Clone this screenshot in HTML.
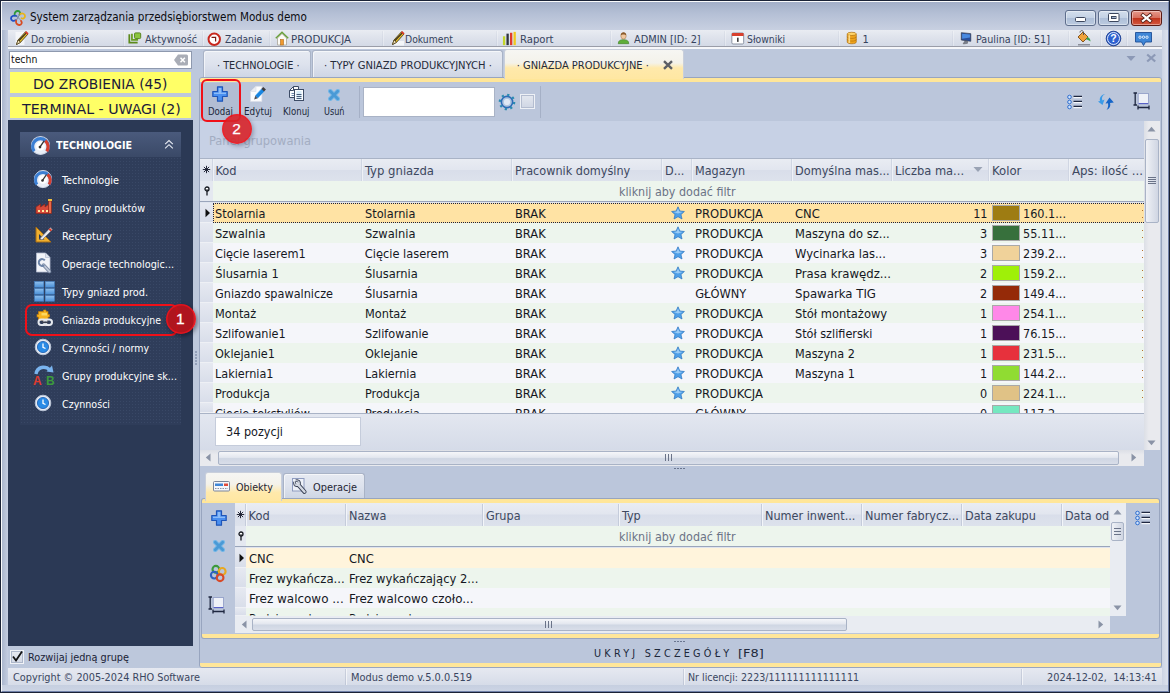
<!DOCTYPE html>
<html lang="pl"><head><meta charset="utf-8"><title>System zarządzania przedsiębiorstwem Modus demo</title>
<style>
html,body{margin:0;padding:0;}
body{width:1170px;height:693px;overflow:hidden;background:#bcc7dc;}
#win{position:relative;width:1170px;height:693px;overflow:hidden;background:#bcc7dc;}
#win div,#win span.t,#win svg{position:absolute;box-sizing:border-box;}
span.t{white-space:nowrap;display:block;}
#win div.sec{left:0;top:0;width:1170px;height:693px;}

</style></head>
<body>
<div id="win">
<div class="sec titlebar">
<div style="left:0px;top:0px;width:1170px;height:693px;background:#bdc8dc;"></div>
<div style="left:2px;top:2px;width:1166px;height:28px;background:linear-gradient(#a3afc8 0%,#b4bfd5 40%,#c8d0e1 100%);"></div>
<div style="left:2px;top:30px;width:6px;height:655px;background:linear-gradient(90deg,#aab6cd,#c4cde0);"></div>
<div style="left:1162px;top:30px;width:6px;height:655px;background:linear-gradient(90deg,#ccd4e4,#dde2ed);"></div>
<div style="left:2px;top:685px;width:1166px;height:6px;background:linear-gradient(#c6cfe0,#ccd4e4);"></div>
<div style="left:1px;top:1px;width:1168px;height:691px;border:1px solid #fafbfc;border-right-color:#7080a8;border-bottom-color:#7080a8;"></div>
<div style="left:0px;top:0px;width:1170px;height:693px;border:1px solid #1a2236;"></div>
<span class="t" style="font-family:'DejaVu Sans Condensed','Liberation Sans',sans-serif;font-size:12px;line-height:15px;color:#0c0c10;left:30px;transform-origin:0 0;top:10.00px;transform:scaleX(0.965);">System zarządzania przedsiębiorstwem Modus demo</span>
<div style="left:1065px;top:10px;width:31px;height:16px;background:linear-gradient(#d3deec 0%,#c4d2e5 48%,#aebfd8 52%,#bccbe0 100%);border:1px solid #5e6e8c;border-radius:3px;box-shadow:inset 0 0 0 1px rgba(255,255,255,.4);"></div>
<div style="left:1098px;top:10px;width:31px;height:16px;background:linear-gradient(#d3deec 0%,#c4d2e5 48%,#aebfd8 52%,#bccbe0 100%);border:1px solid #5e6e8c;border-radius:3px;box-shadow:inset 0 0 0 1px rgba(255,255,255,.4);"></div>
<div style="left:1131px;top:10px;width:31px;height:16px;background:linear-gradient(#e69a8c 0%,#d8705e 48%,#c0341c 52%,#d4563e 100%);border:1px solid #5a1a14;border-radius:3px;box-shadow:inset 0 0 0 1px rgba(255,255,255,.4);"></div>
<svg style="left:1065px;top:10px" width="97" height="16" viewBox="0 0 97 16"><rect x="10.500" y="7.500" width="10" height="4" rx="1" fill="#fff" stroke="#3c475e" stroke-width="1"/><rect x="43.500" y="3.500" width="10.500" height="8" rx="1" fill="#fff" stroke="#3c475e" stroke-width="1"/><rect x="46.500" y="6.500" width="4.500" height="2" fill="#9fb2cc" stroke="#3c475e" stroke-width="1"/><path d="M78 5.200 L85 10.800 M85 5.200 L78 10.800" stroke="#5a2018" stroke-width="3.800" stroke-linecap="square"/><path d="M78 5.200 L85 10.800 M85 5.200 L78 10.800" stroke="#fff" stroke-width="2.200" stroke-linecap="square"/></svg>
<svg style="left:10px;top:10px" width="16" height="16" viewBox="0 0 16 16" fill="none" stroke-linecap="round"><path d="M4.800 5.500 C4 2.500 6 .8 8 1 C10 1.200 10.500 3 9.500 4.500" stroke="#2f9a3a" stroke-width="1.800"/><path d="M10 4.200 C12.500 2.500 15 4 15 6 C15 8 13 9 11.500 8.300" stroke="#e8b418" stroke-width="1.800"/><path d="M6.500 6 C3.500 4.800 1 6.500 1 8.500 C1 10.500 3.500 11.500 5.500 10.300" stroke="#2050c8" stroke-width="1.800"/><path d="M6.200 10.500 C5.500 13.500 7.500 15.200 9.500 15 C11.500 14.800 12.500 12.500 11 10.800" stroke="#d84a20" stroke-width="1.800"/><path d="M6.500 6 L10 9.500 M9.500 4.500 L6.500 10" stroke="#6a7a90" stroke-width=".8"/></svg>
</div>
<div class="sec menubar">
<div style="left:8px;top:30px;width:1154px;height:17px;background:linear-gradient(#e9ecf2,#dfe3ec 45%,#d4dae6);border-bottom:1px solid #9a9da8;"></div>
<div style="left:8px;top:47px;width:1154px;height:1.5px;background:#f6f7fa;"></div>
<span class="t" style="font-family:'DejaVu Sans Condensed','Liberation Sans',sans-serif;font-size:11px;line-height:14px;color:#36435d;left:30.5px;transform-origin:0 0;top:33.00px;transform:scaleX(0.942);">Do zrobienia</span>
<span class="t" style="font-family:'DejaVu Sans Condensed','Liberation Sans',sans-serif;font-size:11px;line-height:14px;color:#36435d;left:145px;transform-origin:0 0;top:33.00px;transform:scaleX(0.977);">Aktywność</span>
<span class="t" style="font-family:'DejaVu Sans Condensed','Liberation Sans',sans-serif;font-size:11px;line-height:14px;color:#36435d;left:225px;transform-origin:0 0;top:33.00px;transform:scaleX(0.918);">Zadanie</span>
<span class="t" style="font-family:'DejaVu Sans Condensed','Liberation Sans',sans-serif;font-size:11px;line-height:14px;color:#36435d;left:291.3px;transform-origin:0 0;top:33.00px;transform:scaleX(1.038);">PRODUKCJA</span>
<span class="t" style="font-family:'DejaVu Sans Condensed','Liberation Sans',sans-serif;font-size:11px;line-height:14px;color:#36435d;left:405.4px;transform-origin:0 0;top:33.00px;transform:scaleX(0.937);">Dokument</span>
<span class="t" style="font-family:'DejaVu Sans Condensed','Liberation Sans',sans-serif;font-size:11px;line-height:14px;color:#36435d;left:519.5px;transform-origin:0 0;top:33.00px;transform:scaleX(1.016);">Raport</span>
<span class="t" style="font-family:'DejaVu Sans Condensed','Liberation Sans',sans-serif;font-size:11px;line-height:14px;color:#36435d;left:634px;transform-origin:0 0;top:33.00px;transform:scaleX(0.989);">ADMIN [ID: 2]</span>
<span class="t" style="font-family:'DejaVu Sans Condensed','Liberation Sans',sans-serif;font-size:11px;line-height:14px;color:#36435d;left:747px;transform-origin:0 0;top:33.00px;transform:scaleX(0.937);">Słowniki</span>
<span class="t" style="font-family:'DejaVu Sans Condensed','Liberation Sans',sans-serif;font-size:11px;line-height:14px;color:#36435d;left:862.5px;transform-origin:0 0;top:33.00px;">1</span>
<span class="t" style="font-family:'DejaVu Sans Condensed','Liberation Sans',sans-serif;font-size:11px;line-height:14px;color:#36435d;left:975.6px;transform-origin:0 0;top:33.00px;transform:scaleX(0.972);">Paulina [ID: 51]</span>
<div style="left:123px;top:31px;width:2px;height:15px;background:linear-gradient(90deg,rgba(140,150,175,.10) 50%,rgba(255,255,255,.30) 50%);"></div>
<div style="left:202px;top:31px;width:2px;height:15px;background:linear-gradient(90deg,rgba(140,150,175,.10) 50%,rgba(255,255,255,.30) 50%);"></div>
<div style="left:269px;top:31px;width:2px;height:15px;background:linear-gradient(90deg,rgba(140,150,175,.10) 50%,rgba(255,255,255,.30) 50%);"></div>
<div style="left:382px;top:31px;width:2px;height:15px;background:linear-gradient(90deg,rgba(140,150,175,.10) 50%,rgba(255,255,255,.30) 50%);"></div>
<div style="left:496px;top:31px;width:2px;height:15px;background:linear-gradient(90deg,rgba(140,150,175,.10) 50%,rgba(255,255,255,.30) 50%);"></div>
<div style="left:610px;top:31px;width:2px;height:15px;background:linear-gradient(90deg,rgba(140,150,175,.10) 50%,rgba(255,255,255,.30) 50%);"></div>
<div style="left:724px;top:31px;width:2px;height:15px;background:linear-gradient(90deg,rgba(140,150,175,.10) 50%,rgba(255,255,255,.30) 50%);"></div>
<div style="left:838px;top:31px;width:2px;height:15px;background:linear-gradient(90deg,rgba(140,150,175,.10) 50%,rgba(255,255,255,.30) 50%);"></div>
<div style="left:952px;top:31px;width:2px;height:15px;background:linear-gradient(90deg,rgba(140,150,175,.10) 50%,rgba(255,255,255,.30) 50%);"></div>
<div style="left:1068px;top:31px;width:2px;height:15px;background:linear-gradient(90deg,rgba(140,150,175,.10) 50%,rgba(255,255,255,.30) 50%);"></div>
<div style="left:1100px;top:31px;width:2px;height:15px;background:linear-gradient(90deg,rgba(140,150,175,.10) 50%,rgba(255,255,255,.30) 50%);"></div>
<div style="left:1126px;top:31px;width:2px;height:15px;background:linear-gradient(90deg,rgba(140,150,175,.10) 50%,rgba(255,255,255,.30) 50%);"></div>
<svg style="left:14px;top:30px" width="16" height="17" viewBox="0 0 16 17"><path d="M1.500 2h9v13h-9z" fill="#f6f7fa" opacity=".9"/><path d="M2.500 14.500 L4 10 L11.500 1.800 L14 4 L6.500 12.300 Z" fill="#f0c828" stroke="#4a3c18" stroke-width=".9"/><path d="M4.800 10.800 L12.600 2.600" stroke="#3a3020" stroke-width="1.300"/><path d="M11.500 1.800 L14 4" stroke="#d83a2a" stroke-width="1.800"/><path d="M2.500 14.500 L4 10 L6.500 12.300 Z" fill="#f4e6c0" stroke="#4a3c18" stroke-width=".7"/></svg>
<svg style="left:128px;top:31.500px" width="14" height="14" viewBox="0 0 16 16"><path d="M1.5 2.5v9.5h9.5" fill="none" stroke="#5c8a1c" stroke-width="2"/><path d="M4.5 2v7h7" fill="none" stroke="#6a9e22" stroke-width="2"/><rect x="7.5" y="1" width="7" height="6.5" rx="1.2" fill="#8cc63f" stroke="#4e7a16"/></svg>
<svg style="left:207px;top:31.500px" width="14.500" height="14.500" viewBox="0 0 16 16"><circle cx="8" cy="8" r="6.3" fill="#fff" stroke="#c8281e" stroke-width="2.2"/><path d="M5 6h4.5v4.5" fill="none" stroke="#7a1a14" stroke-width="1.3"/></svg>
<svg style="left:275px;top:31px" width="14" height="15" viewBox="0 0 14 15"><path d="M2.500 7 L7 2.600 L11.500 7 V14 H2.500z" fill="#fcfaf4" stroke="#a8a498" stroke-width=".8"/><path d="M.8 7.200 L7 1.200 L13.200 7.200" fill="none" stroke="#6aa03a" stroke-width="1.500"/><rect x="5.500" y="8.500" width="3" height="5.500" fill="#f09a30" stroke="#b06a18" stroke-width=".6"/></svg>
<svg style="left:389.500px;top:30px" width="16" height="17" viewBox="0 0 16 17"><path d="M6 11h8v4.500h-10z" fill="#f6f7fa" opacity=".9"/><path d="M2.500 14.500 L4 10 L11.500 1.800 L14 4 L6.500 12.300 Z" fill="#f0c828" stroke="#4a3c18" stroke-width=".9"/><path d="M4.800 10.800 L12.600 2.600" stroke="#3a3020" stroke-width="1.300"/><path d="M11.500 1.800 L14 4" stroke="#d83a2a" stroke-width="1.800"/><path d="M2.500 14.500 L4 10 L6.500 12.300 Z" fill="#f4e6c0" stroke="#4a3c18" stroke-width=".7"/></svg>
<svg style="left:502px;top:31px" width="16" height="15" viewBox="0 0 18 17"><rect x="1" y="6" width="2.6" height="10" fill="#c4d62a"/><rect x="5" y="3" width="2.6" height="13" fill="#2e3440"/><rect x="9" y="2" width="2.6" height="14" fill="#e03a2e"/><rect x="13" y="1" width="2.6" height="15" fill="#f0c81e"/></svg>
<svg style="left:617px;top:31px" width="13" height="14" viewBox="0 0 16 17"><path d="M1.5 15.5c0-4 3-5 6.5-5s6.5 1 6.500 5z" fill="#5fae3a" stroke="#3c7a20" stroke-width=".7"/><ellipse cx="8" cy="6" rx="3.3" ry="3.8" fill="#f0c8a0" stroke="#a87848" stroke-width=".7"/><path d="M4.6 5.2c.2-3 1.8-3.8 3.400-3.800s3.200.8 3.400 3.800c-1.400-1.400-5.400-1.400-6.800 0z" fill="#8a5a2a"/></svg>
<svg style="left:731px;top:31.500px" width="13.500" height="13" viewBox="0 0 16 15"><rect x="1" y="1" width="14" height="13" rx="1.5" fill="#fff" stroke="#7a8496"/><rect x="1" y="1" width="14" height="3.600" rx="1" fill="#d8402e"/><rect x="7.2" y="6.500" width="1.800" height="5" fill="#333"/></svg>
<svg style="left:846px;top:31px" width="11.500" height="14" viewBox="0 0 14 17"><path d="M1.500 3.500v10c0 1.200 2.400 2 5.500 2s5.500-.8 5.500-2v-10" fill="#f0a41c" stroke="#a86808" stroke-width=".8"/><ellipse cx="7" cy="3.500" rx="5.500" ry="2" fill="#ffd46a" stroke="#a86808" stroke-width=".8"/><path d="M1.500 7c0 1.200 2.400 2 5.500 2s5.500-.8 5.500-2M1.500 10.300c0 1.200 2.400 2 5.500 2s5.500-.8 5.500-2" fill="none" stroke="#a86808" stroke-width=".7"/><rect x="3" y="5" width="2" height="9.500" fill="#ffe9a8" opacity=".8"/></svg>
<svg style="left:960px;top:31px" width="12.500" height="14" viewBox="0 0 15 17"><path d="M1.500 2 L13 3.200 V12.500 L1.500 11z" fill="#2a4e9a" stroke="#28324a" stroke-width=".8"/><path d="M2.500 3.200 L12 4.200 V8 L2.500 9.500z" fill="#4a8ae0"/><path d="M6 12l3 .5v2.500l-5 .800v-1z" fill="#7a8090" stroke="#444" stroke-width=".5"/></svg>
<svg style="left:1074.500px;top:29px" width="18" height="18" viewBox="0 0 18 18"><path d="M3 8 L8 3 L13 8 L8 13z" fill="#f0a23a" stroke="#7a4a12" stroke-width=".9"/><path d="M5 3.500 C5 1 8.500 1 8.500 3.500 V6" fill="none" stroke="#555" stroke-width="1"/><path d="M12.500 8c2 .5 3 2.500 3 4.500-1.200-1-2.500-2-4.500-2z" fill="#3aa04a"/><rect x="3" y="15" width="12" height="1.500" fill="#8a8e98"/></svg>
<svg style="left:1105px;top:30px" width="17" height="17" viewBox="0 0 17 17"><circle cx="8.500" cy="8.500" r="7.300" fill="#2f62d0" stroke="#1a3a8a" stroke-width=".9"/><circle cx="8.500" cy="8.500" r="6" fill="none" stroke="#dfe8fa" stroke-width="1"/><text x="8.500" y="12.300" font-family="Liberation Sans,sans-serif" font-weight="bold" font-size="10.500" fill="#fff" text-anchor="middle">?</text></svg>
<svg style="left:1134px;top:31px" width="19" height="16" viewBox="0 0 19 16"><path d="M1.500 1.500h16v9.500h-6l-2 3.500-2-3.500h-6z" fill="#3f86d6" stroke="#1e4e96" stroke-width=".9"/><circle cx="6" cy="6.200" r="1.200" fill="none" stroke="#fff" stroke-width=".8"/><circle cx="9.500" cy="6.200" r="1.200" fill="none" stroke="#fff" stroke-width=".8"/><circle cx="13" cy="6.200" r="1.200" fill="none" stroke="#fff" stroke-width=".8"/></svg>
</div>
<div class="sec sidebar">
<div style="left:9px;top:51px;width:183px;height:18px;background:#fff;border:1px solid #8e99ae;"></div>
<span class="t" style="font-family:'DejaVu Sans Condensed','Liberation Sans',sans-serif;font-size:11px;line-height:14px;color:#111;left:11px;transform-origin:0 0;top:53.00px;transform:scaleX(0.940);">techn</span>
<svg style="left:173px;top:53px" width="16" height="14" viewBox="0 0 16 14"><path d="M1 7 L5 1.500 H13.500 Q15 1.500 15 3 V11 Q15 12.500 13.500 12.500 H5z" fill="#a9adb6"/><path d="M7.500 4.800l4.400 4.400m0-4.400l-4.400 4.400" stroke="#fff" stroke-width="1.500"/></svg>
<div style="left:10px;top:72px;width:181px;height:21px;background:#ffff66;"></div>
<div style="left:10px;top:97px;width:181px;height:21px;background:#ffff66;"></div>
<span class="t" style="font-family:'DejaVu Sans Condensed','Liberation Sans',sans-serif;font-size:14.67px;line-height:18px;color:#1a1a3a;left:33.2px;transform-origin:0 0;top:75.00px;transform:scaleX(1.046);">DO ZROBIENIA (45)</span>
<span class="t" style="font-family:'DejaVu Sans Condensed','Liberation Sans',sans-serif;font-size:14.67px;line-height:18px;color:#1a1a3a;left:21.8px;transform-origin:0 0;top:100.00px;transform:scaleX(1.075);">TERMINAL - UWAGI (2)</span>
<div style="left:8px;top:120px;width:185px;height:526px;background:#2b3955;"></div>
<div style="left:20px;top:157px;width:161px;height:268px;background:#2f3d5a;background-image:radial-gradient(#394866 0.6px,transparent 0.8px);background-size:3px 3px;"></div>
<div style="left:20px;top:132px;width:161px;height:25px;background:linear-gradient(#4a5a7c,#3a4967);"></div>
<span class="t" style="font-family:'DejaVu Sans Condensed','Liberation Sans',sans-serif;font-size:11px;line-height:14px;color:#fff;font-weight:bold;left:56px;transform-origin:0 0;top:139.00px;transform:scaleX(0.966);">TECHNOLOGIE</span>
<svg style="left:164px;top:138.500px" width="10" height="11" viewBox="0 0 13 14"><path d="M1.500 6.500 L6.500 1.800 L11.500 6.500 M1.500 12 L6.500 7.300 L11.500 12" fill="none" stroke="#e8ecf4" stroke-width="1.400"/></svg>
<svg style="left:30px;top:135px" width="21" height="21" viewBox="0 0 20 20"><circle cx="10" cy="10" r="8.600" fill="#e9eef6" stroke="#c9d2e2" stroke-width="1"/><path d="M4 15.500A7.500 7.500 0 1 1 16 15.500" fill="none" stroke="#3b7fd4" stroke-width="3"/><path d="M14.500 5.500A7.500 7.500 0 0 1 16 15.500" fill="none" stroke="#d8402e" stroke-width="3"/><circle cx="10" cy="10.500" r="4.200" fill="#fff"/><path d="M9.200 11.800 L13.500 5.500" stroke="#333" stroke-width="1.300"/><circle cx="9.500" cy="11.500" r="1.300" fill="#333"/></svg>
<span class="t" style="font-family:'DejaVu Sans Condensed','Liberation Sans',sans-serif;font-size:11px;line-height:14px;color:#fff;left:61.5px;transform-origin:0 0;top:174.00px;transform:scaleX(0.979);">Technologie</span>
<span class="t" style="font-family:'DejaVu Sans Condensed','Liberation Sans',sans-serif;font-size:11px;line-height:14px;color:#fff;left:61.5px;transform-origin:0 0;top:202.00px;transform:scaleX(0.968);">Grupy produktów</span>
<span class="t" style="font-family:'DejaVu Sans Condensed','Liberation Sans',sans-serif;font-size:11px;line-height:14px;color:#fff;left:61.5px;transform-origin:0 0;top:230.00px;transform:scaleX(0.993);">Receptury</span>
<span class="t" style="font-family:'DejaVu Sans Condensed','Liberation Sans',sans-serif;font-size:11px;line-height:14px;color:#fff;left:61.5px;transform-origin:0 0;top:258.00px;transform:scaleX(0.979);">Operacje technologic...</span>
<span class="t" style="font-family:'DejaVu Sans Condensed','Liberation Sans',sans-serif;font-size:11px;line-height:14px;color:#fff;left:61.5px;transform-origin:0 0;top:286.00px;transform:scaleX(0.988);">Typy gniazd prod.</span>
<span class="t" style="font-family:'DejaVu Sans Condensed','Liberation Sans',sans-serif;font-size:11px;line-height:14px;color:#fff;left:61.5px;transform-origin:0 0;top:314.00px;transform:scaleX(0.949);">Gniazda produkcyjne</span>
<span class="t" style="font-family:'DejaVu Sans Condensed','Liberation Sans',sans-serif;font-size:11px;line-height:14px;color:#fff;left:61.5px;transform-origin:0 0;top:342.00px;transform:scaleX(0.954);">Czynności / normy</span>
<span class="t" style="font-family:'DejaVu Sans Condensed','Liberation Sans',sans-serif;font-size:11px;line-height:14px;color:#fff;left:61.5px;transform-origin:0 0;top:370.00px;transform:scaleX(0.978);">Grupy produkcyjne sk...</span>
<span class="t" style="font-family:'DejaVu Sans Condensed','Liberation Sans',sans-serif;font-size:11px;line-height:14px;color:#fff;left:61.5px;transform-origin:0 0;top:398.00px;transform:scaleX(0.962);">Czynności</span>
<svg style="left:33px;top:169px" width="20" height="20" viewBox="0 0 20 20"><circle cx="10" cy="10" r="8.600" fill="#e9eef6" stroke="#c9d2e2" stroke-width="1"/><path d="M4 15.500A7.500 7.500 0 1 1 16 15.500" fill="none" stroke="#3b7fd4" stroke-width="3"/><path d="M14.500 5.500A7.500 7.500 0 0 1 16 15.500" fill="none" stroke="#d8402e" stroke-width="3"/><circle cx="10" cy="10.500" r="4.200" fill="#fff"/><path d="M9.200 11.800 L13.500 5.500" stroke="#333" stroke-width="1.300"/><circle cx="9.500" cy="11.500" r="1.300" fill="#333"/></svg>
<svg style="left:34px;top:338px" width="18" height="18" viewBox="0 0 18 18"><circle cx="9" cy="9" r="7.800" fill="#e6ebf3" stroke="#b8c2d4"/><circle cx="9" cy="9" r="5.600" fill="#2a8be6" stroke="#1a5cae" stroke-width=".8"/><path d="M9 5.500V9.300L11.500 10.500" fill="none" stroke="#fff" stroke-width="1.300"/></svg>
<svg style="left:34px;top:394px" width="18" height="18" viewBox="0 0 18 18"><circle cx="9" cy="9" r="7.800" fill="#e6ebf3" stroke="#b8c2d4"/><circle cx="9" cy="9" r="5.600" fill="#2a8be6" stroke="#1a5cae" stroke-width=".8"/><path d="M9 5.500V9.300L11.500 10.500" fill="none" stroke="#fff" stroke-width="1.300"/></svg>
<svg style="left:35px;top:198px" width="18" height="17" viewBox="0 0 18 17"><path d="M1 15.500V9l4.500-3v3l4.500-3v3l4-3V15.500z" fill="#d84a3a" stroke="#8a2418" stroke-width=".7"/><rect x="13.500" y="3" width="3" height="12.500" fill="#e86a4a" stroke="#8a2418" stroke-width=".7"/><rect x="13" y="1" width="4" height="2" fill="#f0c040"/><path d="M3 12h2v2H3zM7 12h2v2H7zM11 12h2v2h-2z" fill="#ffe9a0"/></svg>
<svg style="left:34px;top:225px" width="20" height="19" viewBox="0 0 20 19"><path d="M2 2 L2 17 L17 17z" fill="#f0b030" stroke="#a86c10" stroke-width="1"/><path d="M5 9v5.500h5.500z" fill="#2b3955"/><path d="M6 13.500 L16.500 2.500 L18.500 4.500 L8 15z" fill="#e8eaf0" stroke="#6a7080" stroke-width=".7"/><path d="M15.300 3.800l2 2" stroke="#d8402e" stroke-width="2.200"/></svg>
<svg style="left:35px;top:252px" width="18" height="22" viewBox="0 0 18 22"><path d="M1.500 1h9l4.500 4.500v14.500h-13.500z" fill="#f2f4f9" stroke="#b4bdd0" stroke-width=".8"/><path d="M10.500 1v4.500h4.500" fill="#dfe4ee" stroke="#b4bdd0" stroke-width=".7"/><path d="M8.500 13 L14.500 19.500" stroke="#7f8ea8" stroke-width="3.400" stroke-linecap="round"/><path d="M8.500 13 L14.500 19.500" stroke="#c4ccda" stroke-width="1.600" stroke-linecap="round"/><path d="M9.800 8.300 A3.400 3.400 0 1 0 9.300 13.200" fill="none" stroke="#6c84a8" stroke-width="2"/></svg>
<svg style="left:33.500px;top:280.500px" width="21" height="21" viewBox="0 0 21 21"><defs><linearGradient id="tg" x1="0" y1="0" x2="0" y2="1"><stop offset="0" stop-color="#8fc0ee"/><stop offset="1" stop-color="#4a8fd6"/></linearGradient></defs><g fill="url(#tg)" stroke="#3c7cc4" stroke-width=".5"><rect x=".5" y=".5" width="9.300" height="5.800"/><rect x="11.200" y=".5" width="9.300" height="5.800"/><rect x=".5" y="7.500" width="9.300" height="5.800"/><rect x="11.200" y="7.500" width="9.300" height="5.800"/><rect x=".5" y="14.500" width="9.300" height="5.800"/><rect x="11.200" y="14.500" width="9.300" height="5.800"/></g></svg>
<svg style="left:35px;top:309px" width="19" height="19" viewBox="0 0 19 19"><path d="M6.500 2.500 h2 v-1.500 h2.500 v1.500 h2 v3 h1.500 v2.500 h-1.500 v3 h-9.500 v-3 h-1.500 v-2.500 h1.500 v-3 z" fill="#f6b420" stroke="#c47c08" stroke-width=".7" stroke-linejoin="round"/><path d="M6.500 4 h5.500 v2.500 h-5.500z" fill="#fcd860"/><rect x="3.500" y="10.500" width="8" height="5.500" rx="2.700" fill="none" stroke="#e4e8ee" stroke-width="2"/><rect x="9" y="10.500" width="8" height="5.500" rx="2.700" fill="none" stroke="#e4e8ee" stroke-width="2"/><path d="M7 13.300 h6.500" stroke="#3a4050" stroke-width="1.600"/></svg>
<svg style="left:32px;top:363px" width="24" height="24" viewBox="0 0 24 24"><path d="M4 11 C5 4 13 2 18 7" fill="none" stroke="#7ab4ee" stroke-width="3.400"/><path d="M14.500 8.500 L21.500 9.500 L20 2.500z" fill="#7ab4ee"/><text x="1" y="22" font-family="Liberation Sans,sans-serif" font-weight="bold" font-size="12" fill="#e03a2e">A</text><text x="14" y="22" font-family="Liberation Sans,sans-serif" font-weight="bold" font-size="12" fill="#3c9a3c">B</text></svg>
<div style="left:24.5px;top:304px;width:153.5px;height:32px;border:2.300px solid #f01018;border-radius:7px;"></div>
<div style="left:165.7px;top:303.6px;width:30px;height:30px;background:radial-gradient(circle closest-side,#b9121a 0%,#b9121a 86%,#f01018 93%,#f01018 100%);border-radius:50%;opacity:.93;box-shadow:1.500px 2px 4px rgba(0,0,10,.45);"></div>
<span class="t" style="font-family:'Liberation Sans','DejaVu Sans',sans-serif;font-size:15.5px;line-height:19px;color:#fff;left:175.9875px;transform-origin:0 0;top:309.00px;-webkit-text-stroke:.3px #fff;">1</span>
<div style="left:195px;top:351px;width:2px;height:2px;background:#8592ae;border-radius:1px;"></div>
<div style="left:195px;top:354px;width:2px;height:2px;background:#8592ae;border-radius:1px;"></div>
<div style="left:195px;top:357px;width:2px;height:2px;background:#8592ae;border-radius:1px;"></div>
<div style="left:195px;top:360px;width:2px;height:2px;background:#8592ae;border-radius:1px;"></div>
<div style="left:195px;top:363px;width:2px;height:2px;background:#8592ae;border-radius:1px;"></div>
<div style="left:10px;top:650px;width:14px;height:14px;background:linear-gradient(#e8ebf1,#d2d8e5);border:1px solid #f1f3f7;outline:1px solid #aeb8cb;outline-offset:-2px;"></div>
<svg style="left:10px;top:649px" width="15" height="15" viewBox="0 0 15 15"><path d="M3 7.500 L6 11.500 L12 2.500" fill="none" stroke="#111" stroke-width="1.800"/></svg>
<span class="t" style="font-family:'DejaVu Sans Condensed','Liberation Sans',sans-serif;font-size:11px;line-height:14px;color:#1a2236;left:27.5px;transform-origin:0 0;top:651.00px;transform:scaleX(0.983);">Rozwijaj jedną grupę</span>
</div>
<div class="sec statusbar">
<div style="left:8px;top:668px;width:1154px;height:17px;background:linear-gradient(#e6e9f1,#d6dce8);"></div>
<span class="t" style="font-family:'DejaVu Sans Condensed','Liberation Sans',sans-serif;font-size:11px;line-height:14px;color:#3a4660;left:12.5px;transform-origin:0 0;top:671.00px;transform:scaleX(0.982);">Copyright © 2005-2024 RHO Software</span>
<span class="t" style="font-family:'DejaVu Sans Condensed','Liberation Sans',sans-serif;font-size:11px;line-height:14px;color:#3a4660;left:350.5px;transform-origin:0 0;top:671.00px;transform:scaleX(0.992);">Modus demo v.5.0.0.519</span>
<span class="t" style="font-family:'DejaVu Sans Condensed','Liberation Sans',sans-serif;font-size:11px;line-height:14px;color:#3a4660;left:688px;transform-origin:0 0;top:671.00px;transform:scaleX(0.959);">Nr licencji: 2223/111111111111111</span>
<span class="t" style="font-family:'DejaVu Sans Condensed','Liberation Sans',sans-serif;font-size:11px;line-height:14px;color:#3a4660;left:1047px;transform-origin:0 0;top:671.00px;transform:scaleX(0.988);white-space:pre;">2024-12-02,  14:13:41</span>
<div style="left:345px;top:669px;width:2px;height:16px;background:linear-gradient(90deg,rgba(140,150,175,.3) 50%,rgba(255,255,255,.6) 50%);"></div>
<div style="left:683px;top:669px;width:2px;height:16px;background:linear-gradient(90deg,rgba(140,150,175,.3) 50%,rgba(255,255,255,.6) 50%);"></div>
<div style="left:1021px;top:669px;width:2px;height:16px;background:linear-gradient(90deg,rgba(140,150,175,.3) 50%,rgba(255,255,255,.6) 50%);"></div>
</div>
<div class="sec tabs">
<div style="left:203px;top:50px;width:108px;height:28px;background:linear-gradient(#e6eaf2 0%,#dde2ed 50%,#cdd5e4 100%);border:1px solid #a9b3c6;border-bottom:none;border-radius:3px 3px 0 0;box-shadow:inset 1px 1px 0 rgba(255,255,255,.6);"></div>
<div style="left:312px;top:50px;width:191px;height:28px;background:linear-gradient(#e6eaf2 0%,#dde2ed 50%,#cdd5e4 100%);border:1px solid #a9b3c6;border-bottom:none;border-radius:3px 3px 0 0;box-shadow:inset 1px 1px 0 rgba(255,255,255,.6);"></div>
<span class="t" style="font-family:'DejaVu Sans Condensed','Liberation Sans',sans-serif;font-size:11px;line-height:14px;color:#252b3a;left:216.5px;transform-origin:0 0;top:59.00px;transform:scaleX(0.980);">· TECHNOLOGIE ·</span>
<span class="t" style="font-family:'DejaVu Sans Condensed','Liberation Sans',sans-serif;font-size:11px;line-height:14px;color:#252b3a;left:324px;transform-origin:0 0;top:59.00px;transform:scaleX(1.011);">· TYPY GNIAZD PRODUKCYJNYCH ·</span>
<div style="left:199px;top:77px;width:963px;height:591px;background:#bbc6db;border:1px solid #98a5bf;border-radius:3px;"></div>
<div style="left:200px;top:78px;width:961px;height:4px;background:#ffe699;border-radius:2px 2px 0 0;"></div>
<div style="left:504px;top:49px;width:180px;height:30px;background:linear-gradient(#f6f6f3 0%,#f4f2ea 45%,#ffe9ab 62%,#ffe7a2 100%);border:1px solid #c9cfdb;border-bottom:none;border-radius:3px 3px 0 0;"></div>
<span class="t" style="font-family:'DejaVu Sans Condensed','Liberation Sans',sans-serif;font-size:11px;line-height:14px;color:#252b3a;left:516.7px;transform-origin:0 0;top:59.00px;">· GNIAZDA PRODUKCYJNE ·</span>
<svg style="left:662px;top:59px" width="12" height="12" viewBox="0 0 12 12"><path d="M2 2.200 L10 9.800 M10 2.200 L2 9.800" stroke="#5c5f66" stroke-width="2.400"/></svg>
<svg style="left:1124px;top:52px" width="36" height="12" viewBox="0 0 36 12"><path d="M2.500 4 H11.500 L7 9z" fill="#8c99b6"/><path d="M23.200 2.500 L31.200 9.500 M31.200 2.500 L23.200 9.500" stroke="#8c99b6" stroke-width="2.300"/></svg>
</div>
<div class="sec toolbar">
<div style="left:202px;top:83px;width:37px;height:37px;background:#b2bdd3;border-radius:4px;"></div>
<span class="t" style="font-family:'DejaVu Sans Condensed','Liberation Sans',sans-serif;font-size:9.7px;line-height:12px;color:#20283a;left:207.5px;transform-origin:0 0;top:106.00px;transform:scaleX(0.986);">Dodaj</span>
<span class="t" style="font-family:'DejaVu Sans Condensed','Liberation Sans',sans-serif;font-size:9.7px;line-height:12px;color:#20283a;left:244px;transform-origin:0 0;top:106.00px;transform:scaleX(1.016);">Edytuj</span>
<span class="t" style="font-family:'DejaVu Sans Condensed','Liberation Sans',sans-serif;font-size:9.7px;line-height:12px;color:#20283a;left:283px;transform-origin:0 0;top:106.00px;transform:scaleX(0.983);">Klonuj</span>
<span class="t" style="font-family:'DejaVu Sans Condensed','Liberation Sans',sans-serif;font-size:9.7px;line-height:12px;color:#20283a;left:323.5px;transform-origin:0 0;top:106.00px;transform:scaleX(0.932);">Usuń</span>
<svg style="left:212px;top:86px" width="16" height="16" viewBox="0 0 16 16"><path d="M5.500 .8h5v4.700h4.700v5h-4.700v4.700h-5v-4.700h-4.700v-5h4.700z" fill="#4a8ff0" stroke="#1f55b8" stroke-width="1.200" stroke-linejoin="round"/><path d="M6.700 2h2.600v4.700h4.700v1.300h-12v-1.300h4.700z" fill="#a4cbfb" opacity=".75"/></svg>
<svg style="left:249px;top:85px" width="18" height="18" viewBox="0 0 18 18"><path d="M1.500 6.500 L7 1.300 H12.900 V16.400 H1.500z" fill="#fdfdfe" stroke="#d9dde6" stroke-width=".7"/><path d="M1.500 6.500 H7 V1.300z" fill="#eceef3" stroke="#d4d9e2" stroke-width=".5"/><path d="M14 5 L7.500 12" stroke="#1a86e0" stroke-width="3.700"/><path d="M15.600 3.300 L13.700 5.300" stroke="#3c3c40" stroke-width="3.700"/><path d="M6.200 10.800 L8.800 13.300 L5.200 14.500z" fill="#4c4f58"/><path d="M12.300 4.200 L6.800 10.200" stroke="#5cb0f4" stroke-width=".9" opacity=".7"/></svg>
<svg style="left:289px;top:86px" width="16" height="16" viewBox="0 0 16 16"><path d="M.5 4.500 L4.500 .5 H9.500 V11.500 H.5z" fill="#fbfdff" stroke="#3d4c66" stroke-width="1"/><path d="M.5 4.500H4.500V.5" fill="none" stroke="#3d4c66" stroke-width="1"/><path d="M2.500 7.500h3M2.500 9.500h3M6 3.500h2" stroke="#6a86a8" stroke-width="1"/><rect x="5.500" y="3.500" width="9" height="11" fill="#fbfdff" stroke="#3d4c66" stroke-width="1"/><rect x="7.500" y="5" width="5" height="8.500" fill="#d8ecf8"/><path d="M7.500 8.500h5M7.500 10.500h5M7.500 12.500h5" stroke="#4a5d7c" stroke-width="1"/></svg>
<svg style="left:328px;top:88.5px" width="12" height="12" viewBox="0 0 12 12"><path d="M2.200 2.200 L9.800 9.800 M9.800 2.200 L2.200 9.800" stroke="#6ab6ea" stroke-width="4.600" stroke-linecap="round" opacity=".8"/><path d="M2.300 2.300 L9.700 9.700 M9.700 2.300 L2.300 9.700" stroke="#4a9ad6" stroke-width="2.800" stroke-linecap="round"/></svg>
<div style="left:359px;top:86px;width:1px;height:32px;background:#a5b0c6;"></div>
<div style="left:363px;top:87px;width:132px;height:30px;background:#fff;border:1px solid #a9b3c6;"></div>
<svg style="left:498px;top:93px" width="18" height="18" viewBox="0 0 18 18"><circle cx="9" cy="9" r="5.600" fill="none" stroke="#2c6cb8" stroke-width="1.600"/><circle cx="9" cy="9" r="7.200" fill="none" stroke="#2a8ab0" stroke-width="2.200" stroke-dasharray="2.200 3.450"/><circle cx="9" cy="9" r="3.800" fill="#dfe8f4" stroke="#8ab0d8" stroke-width=".6"/></svg>
<div style="left:520px;top:94px;width:15px;height:15px;background:linear-gradient(#e4e8f0,#cfd6e4);border:1px solid #eef1f6;outline:1px solid #b4bdd0;outline-offset:-2px;"></div>
<div style="left:540px;top:86px;width:1px;height:32px;background:#a5b0c6;"></div>
<svg style="left:1066.5px;top:94px" width="17" height="16" viewBox="0 0 17 16"><g fill="#cfe2fb" stroke="#2f6fd0" stroke-width="1"><circle cx="2.500" cy="3" r="1.800"/><circle cx="2.500" cy="8" r="1.800"/><circle cx="2.500" cy="13" r="1.800"/></g><path d="M6.500 3.500h8.500M6.500 8.500h8.500M6.500 13.500h8.500" stroke="#f4f6fa" stroke-width="1.400"/><path d="M6.500 2.400h8.500M6.500 7.400h8.500M6.500 12.400h8.500" stroke="#1e2740" stroke-width="1.400"/></svg>
<svg style="left:1097px;top:93px" width="18" height="18" viewBox="0 0 18 18"><path d="M8.500 1 C5 2.500 4.500 5 5.500 7.500 L7.500 6.500 L5.500 12 L1 8.500 L3 8 C2 4.500 4.500 1.500 8.500 1z" fill="#3a9be8"/><path d="M9.500 17 C13 15.500 13.800 12.500 13 10 L16.800 9.500 L12.500 4.500 L8.500 10.500 L11 10.300 C11.500 13 11 15 9.500 17z" fill="#1565c8"/></svg>
<svg style="left:1132.5px;top:92px" width="17" height="18" viewBox="0 0 17 18"><rect x="5.200" y="1.500" width="10.300" height="10.500" fill="#eef1f8" stroke="#9aa6cc" stroke-width="1"/><path d="M5.700 11.500h9.500" stroke="#5a62c8" stroke-width="1"/><path d="M.5 1h3.500M2.200 1v12M.5 13h3.500" stroke="#1e2740" stroke-width="1.300" fill="none"/><path d="M5 13.500v4M5 15.500h11M16 13.500v4" stroke="#1e2740" stroke-width="1.300" fill="none"/></svg>
</div>
<div class="sec group-panel">
<div style="left:200px;top:121px;width:944px;height:37px;background:#c7d1e5;"></div>
<span class="t" style="font-family:'DejaVu Sans Condensed','Liberation Sans',sans-serif;font-size:12.7px;line-height:16px;color:#a3adc2;left:209px;transform-origin:0 0;top:133.00px;transform:scaleX(1.005);">Panel grupowania</span>
<div style="left:200.5px;top:78.5px;width:40px;height:43.2px;border:2.200px solid #f01018;border-radius:6px;"></div>
<div style="left:221.7px;top:113.5px;width:30px;height:30px;background:radial-gradient(circle closest-side,#d8242a 0%,#d8242a 86%,#f01018 93%,#f01018 100%);border-radius:50%;opacity:.9;box-shadow:1.500px 2px 4px rgba(40,50,80,.4);"></div>
<span class="t" style="font-family:'Liberation Sans','DejaVu Sans',sans-serif;font-size:15.5px;line-height:19px;color:#fff;left:232.1875px;transform-origin:0 0;top:119.00px;-webkit-text-stroke:.25px #fff;">2</span>
</div>
<div class="sec grid">
<div style="left:200px;top:158px;width:944px;height:23px;background:linear-gradient(#e9ecf3 0%,#e2e6ef 48%,#d9deea 52%,#dde2ec 100%);border-top:1px solid #a9b3c6;"></div>
<div style="left:212px;top:159px;width:2px;height:22px;background:linear-gradient(90deg,#d0d6e3 50%,#eef1f6 50%);"></div>
<span class="t" style="font-family:'DejaVu Sans Condensed','Liberation Sans',sans-serif;font-size:12.7px;line-height:16px;color:#3d4860;left:215.5px;transform-origin:0 0;top:163.00px;">Kod</span>
<div style="left:361px;top:159px;width:2px;height:22px;background:linear-gradient(90deg,#d0d6e3 50%,#eef1f6 50%);"></div>
<span class="t" style="font-family:'DejaVu Sans Condensed','Liberation Sans',sans-serif;font-size:12.7px;line-height:16px;color:#3d4860;left:364.5px;transform-origin:0 0;top:163.00px;transform:scaleX(1.021);">Typ gniazda</span>
<div style="left:511px;top:159px;width:2px;height:22px;background:linear-gradient(90deg,#d0d6e3 50%,#eef1f6 50%);"></div>
<span class="t" style="font-family:'DejaVu Sans Condensed','Liberation Sans',sans-serif;font-size:12.7px;line-height:16px;color:#3d4860;left:514.5px;transform-origin:0 0;top:163.00px;transform:scaleX(0.987);">Pracownik domyślny</span>
<div style="left:661px;top:159px;width:2px;height:22px;background:linear-gradient(90deg,#d0d6e3 50%,#eef1f6 50%);"></div>
<span class="t" style="font-family:'DejaVu Sans Condensed','Liberation Sans',sans-serif;font-size:12.7px;line-height:16px;color:#3d4860;left:664.5px;transform-origin:0 0;top:163.00px;transform:scaleX(0.987);">D...</span>
<div style="left:691px;top:159px;width:2px;height:22px;background:linear-gradient(90deg,#d0d6e3 50%,#eef1f6 50%);"></div>
<span class="t" style="font-family:'DejaVu Sans Condensed','Liberation Sans',sans-serif;font-size:12.7px;line-height:16px;color:#3d4860;left:694.5px;transform-origin:0 0;top:163.00px;transform:scaleX(0.983);">Magazyn</span>
<div style="left:791px;top:159px;width:2px;height:22px;background:linear-gradient(90deg,#d0d6e3 50%,#eef1f6 50%);"></div>
<span class="t" style="font-family:'DejaVu Sans Condensed','Liberation Sans',sans-serif;font-size:12.7px;line-height:16px;color:#3d4860;left:794.5px;transform-origin:0 0;top:163.00px;transform:scaleX(0.991);">Domyślna mas...</span>
<div style="left:891px;top:159px;width:2px;height:22px;background:linear-gradient(90deg,#d0d6e3 50%,#eef1f6 50%);"></div>
<span class="t" style="font-family:'DejaVu Sans Condensed','Liberation Sans',sans-serif;font-size:12.7px;line-height:16px;color:#3d4860;left:894.5px;transform-origin:0 0;top:163.00px;transform:scaleX(1.006);">Liczba ma...</span>
<div style="left:988px;top:159px;width:2px;height:22px;background:linear-gradient(90deg,#d0d6e3 50%,#eef1f6 50%);"></div>
<span class="t" style="font-family:'DejaVu Sans Condensed','Liberation Sans',sans-serif;font-size:12.7px;line-height:16px;color:#3d4860;left:991.5px;transform-origin:0 0;top:163.00px;transform:scaleX(1.025);">Kolor</span>
<div style="left:1068px;top:159px;width:2px;height:22px;background:linear-gradient(90deg,#d0d6e3 50%,#eef1f6 50%);"></div>
<span class="t" style="font-family:'DejaVu Sans Condensed','Liberation Sans',sans-serif;font-size:12.7px;line-height:16px;color:#3d4860;left:1071.5px;transform-origin:0 0;top:163.00px;transform:scaleX(1.037);">Aps: ilość ...</span>
<svg style="left:973px;top:166px" width="10" height="7" viewBox="0 0 10 7"><path d="M.5 1h9L5 6z" fill="#9aa3b4"/></svg>
<svg style="left:202px;top:165px" width="9" height="9" viewBox="0 0 9 9"><path d="M4.500 .8V8.200M.8 4.500H8.200M1.900 1.900L7.100 7.100M7.100 1.900L1.900 7.100" stroke="#1c2030" stroke-width=".95"/></svg>
<div style="left:200px;top:181px;width:13px;height:21px;background:#e4e8f0;"></div>
<div style="left:213px;top:181px;width:931px;height:20px;background:#edf5ed;"></div>
<div style="left:200px;top:201px;width:944px;height:2px;background:linear-gradient(#9aa5bb 50%,#dfe4ee 50%);"></div>
<span class="t" style="font-family:'DejaVu Sans Condensed','Liberation Sans',sans-serif;font-size:12.7px;line-height:16px;color:#6b7386;left:619px;transform-origin:0 0;top:184.00px;transform:scaleX(0.977);">kliknij aby dodać filtr</span>
<svg style="left:203px;top:186px" width="8" height="11" viewBox="0 0 8 11"><circle cx="4" cy="3" r="2" fill="#fff" stroke="#15181f" stroke-width="1.300"/><path d="M2.600 3.400a1.500 1.500 0 0 0 2.800 0z" fill="#15181f"/><path d="M4 5v4.500" stroke="#15181f" stroke-width="1.300"/></svg>
<div style="left:213px;top:203px;width:931px;height:20px;background:#ffe3a4;"></div>
<div style="left:200px;top:203px;width:13px;height:20px;background:linear-gradient(#e6e9f1,#d9deea);border-bottom:1px solid #eef0f5;"></div>
<svg style="left:671px;top:206px" width="14" height="14" viewBox="0 0 14 14"><path d="M7 .8 L8.900 5 L13.400 5.500 L10 8.500 L11 13 L7 10.700 L3 13 L4 8.500 L.6 5.500 L5.100 5z" fill="#4fa0e8" stroke="#2a72c0" stroke-width=".7" stroke-linejoin="round"/><path d="M7 2.500 L8.300 5.600 L11.500 6 L7 7.500 L2.500 6 L5.700 5.600z" fill="#a8d4f8" opacity=".85"/></svg>
<div style="left:992px;top:205px;width:28px;height:16px;background:#9e7c12;border:1px solid #a9a9a9;"></div>
<div style="left:213px;top:223px;width:931px;height:20px;background:#edf5ed;"></div>
<div style="left:200px;top:223px;width:13px;height:20px;background:linear-gradient(#e6e9f1,#d9deea);border-bottom:1px solid #eef0f5;"></div>
<svg style="left:671px;top:226px" width="14" height="14" viewBox="0 0 14 14"><path d="M7 .8 L8.900 5 L13.400 5.500 L10 8.500 L11 13 L7 10.700 L3 13 L4 8.500 L.6 5.500 L5.100 5z" fill="#4fa0e8" stroke="#2a72c0" stroke-width=".7" stroke-linejoin="round"/><path d="M7 2.500 L8.300 5.600 L11.500 6 L7 7.500 L2.500 6 L5.700 5.600z" fill="#a8d4f8" opacity=".85"/></svg>
<div style="left:992px;top:225px;width:28px;height:16px;background:#37703c;border:1px solid #a9a9a9;"></div>
<div style="left:213px;top:243px;width:931px;height:20px;background:#f5f6fa;"></div>
<div style="left:200px;top:243px;width:13px;height:20px;background:linear-gradient(#e6e9f1,#d9deea);border-bottom:1px solid #eef0f5;"></div>
<svg style="left:671px;top:246px" width="14" height="14" viewBox="0 0 14 14"><path d="M7 .8 L8.900 5 L13.400 5.500 L10 8.500 L11 13 L7 10.700 L3 13 L4 8.500 L.6 5.500 L5.100 5z" fill="#4fa0e8" stroke="#2a72c0" stroke-width=".7" stroke-linejoin="round"/><path d="M7 2.500 L8.300 5.600 L11.500 6 L7 7.500 L2.500 6 L5.700 5.600z" fill="#a8d4f8" opacity=".85"/></svg>
<div style="left:992px;top:245px;width:28px;height:16px;background:#f0d29a;border:1px solid #a9a9a9;"></div>
<div style="left:213px;top:263px;width:931px;height:20px;background:#edf5ed;"></div>
<div style="left:200px;top:263px;width:13px;height:20px;background:linear-gradient(#e6e9f1,#d9deea);border-bottom:1px solid #eef0f5;"></div>
<svg style="left:671px;top:266px" width="14" height="14" viewBox="0 0 14 14"><path d="M7 .8 L8.900 5 L13.400 5.500 L10 8.500 L11 13 L7 10.700 L3 13 L4 8.500 L.6 5.500 L5.100 5z" fill="#4fa0e8" stroke="#2a72c0" stroke-width=".7" stroke-linejoin="round"/><path d="M7 2.500 L8.300 5.600 L11.500 6 L7 7.500 L2.500 6 L5.700 5.600z" fill="#a8d4f8" opacity=".85"/></svg>
<div style="left:992px;top:265px;width:28px;height:16px;background:#9ff008;border:1px solid #a9a9a9;"></div>
<div style="left:213px;top:283px;width:931px;height:20px;background:#f5f6fa;"></div>
<div style="left:200px;top:283px;width:13px;height:20px;background:linear-gradient(#e6e9f1,#d9deea);border-bottom:1px solid #eef0f5;"></div>
<div style="left:992px;top:285px;width:28px;height:16px;background:#952a08;border:1px solid #a9a9a9;"></div>
<div style="left:213px;top:303px;width:931px;height:20px;background:#edf5ed;"></div>
<div style="left:200px;top:303px;width:13px;height:20px;background:linear-gradient(#e6e9f1,#d9deea);border-bottom:1px solid #eef0f5;"></div>
<svg style="left:671px;top:306px" width="14" height="14" viewBox="0 0 14 14"><path d="M7 .8 L8.900 5 L13.400 5.500 L10 8.500 L11 13 L7 10.700 L3 13 L4 8.500 L.6 5.500 L5.100 5z" fill="#4fa0e8" stroke="#2a72c0" stroke-width=".7" stroke-linejoin="round"/><path d="M7 2.500 L8.300 5.600 L11.500 6 L7 7.500 L2.500 6 L5.700 5.600z" fill="#a8d4f8" opacity=".85"/></svg>
<div style="left:992px;top:305px;width:28px;height:16px;background:#ff88e8;border:1px solid #a9a9a9;"></div>
<div style="left:213px;top:323px;width:931px;height:20px;background:#f5f6fa;"></div>
<div style="left:200px;top:323px;width:13px;height:20px;background:linear-gradient(#e6e9f1,#d9deea);border-bottom:1px solid #eef0f5;"></div>
<svg style="left:671px;top:326px" width="14" height="14" viewBox="0 0 14 14"><path d="M7 .8 L8.900 5 L13.400 5.500 L10 8.500 L11 13 L7 10.700 L3 13 L4 8.500 L.6 5.500 L5.100 5z" fill="#4fa0e8" stroke="#2a72c0" stroke-width=".7" stroke-linejoin="round"/><path d="M7 2.500 L8.300 5.600 L11.500 6 L7 7.500 L2.500 6 L5.700 5.600z" fill="#a8d4f8" opacity=".85"/></svg>
<div style="left:992px;top:325px;width:28px;height:16px;background:#4c1058;border:1px solid #a9a9a9;"></div>
<div style="left:213px;top:343px;width:931px;height:20px;background:#edf5ed;"></div>
<div style="left:200px;top:343px;width:13px;height:20px;background:linear-gradient(#e6e9f1,#d9deea);border-bottom:1px solid #eef0f5;"></div>
<svg style="left:671px;top:346px" width="14" height="14" viewBox="0 0 14 14"><path d="M7 .8 L8.900 5 L13.400 5.500 L10 8.500 L11 13 L7 10.700 L3 13 L4 8.500 L.6 5.500 L5.100 5z" fill="#4fa0e8" stroke="#2a72c0" stroke-width=".7" stroke-linejoin="round"/><path d="M7 2.500 L8.300 5.600 L11.500 6 L7 7.500 L2.500 6 L5.700 5.600z" fill="#a8d4f8" opacity=".85"/></svg>
<div style="left:992px;top:345px;width:28px;height:16px;background:#e7313c;border:1px solid #a9a9a9;"></div>
<div style="left:213px;top:363px;width:931px;height:20px;background:#f5f6fa;"></div>
<div style="left:200px;top:363px;width:13px;height:20px;background:linear-gradient(#e6e9f1,#d9deea);border-bottom:1px solid #eef0f5;"></div>
<svg style="left:671px;top:366px" width="14" height="14" viewBox="0 0 14 14"><path d="M7 .8 L8.900 5 L13.400 5.500 L10 8.500 L11 13 L7 10.700 L3 13 L4 8.500 L.6 5.500 L5.100 5z" fill="#4fa0e8" stroke="#2a72c0" stroke-width=".7" stroke-linejoin="round"/><path d="M7 2.500 L8.300 5.600 L11.500 6 L7 7.500 L2.500 6 L5.700 5.600z" fill="#a8d4f8" opacity=".85"/></svg>
<div style="left:992px;top:365px;width:28px;height:16px;background:#90dc32;border:1px solid #a9a9a9;"></div>
<div style="left:213px;top:383px;width:931px;height:20px;background:#edf5ed;"></div>
<div style="left:200px;top:383px;width:13px;height:20px;background:linear-gradient(#e6e9f1,#d9deea);border-bottom:1px solid #eef0f5;"></div>
<svg style="left:671px;top:386px" width="14" height="14" viewBox="0 0 14 14"><path d="M7 .8 L8.900 5 L13.400 5.500 L10 8.500 L11 13 L7 10.700 L3 13 L4 8.500 L.6 5.500 L5.100 5z" fill="#4fa0e8" stroke="#2a72c0" stroke-width=".7" stroke-linejoin="round"/><path d="M7 2.500 L8.300 5.600 L11.500 6 L7 7.500 L2.500 6 L5.700 5.600z" fill="#a8d4f8" opacity=".85"/></svg>
<div style="left:992px;top:385px;width:28px;height:16px;background:#e0c286;border:1px solid #a9a9a9;"></div>
<div style="left:213px;top:403px;width:931px;height:10px;background:#f5f6fa;"></div>
<div style="left:200px;top:403px;width:13px;height:10px;background:linear-gradient(#e6e9f1,#d9deea);border-bottom:1px solid #eef0f5;"></div>
<div style="left:992px;top:405px;width:28px;height:8px;background:#75e8c0;border:1px solid #a9a9a9;border-bottom:none;"></div>
<div style="left:213px;top:203px;width:931px;height:20px;border:1px dotted #1a2040;border-right:none;"></div>
<svg style="left:205px;top:208px" width="6" height="10" viewBox="0 0 6 10"><path d="M.5 .8 L5 5 L.5 9.200z" fill="#111"/></svg>
<span class="t" style="font-family:'DejaVu Sans Condensed','Liberation Sans',sans-serif;font-size:12.7px;line-height:16px;color:#15181f;left:215.3px;transform-origin:0 0;top:206.00px;transform:scaleX(0.995);">Stolarnia</span>
<span class="t" style="font-family:'DejaVu Sans Condensed','Liberation Sans',sans-serif;font-size:12.7px;line-height:16px;color:#15181f;left:364.8px;transform-origin:0 0;top:206.00px;transform:scaleX(0.995);">Stolarnia</span>
<span class="t" style="font-family:'DejaVu Sans Condensed','Liberation Sans',sans-serif;font-size:12.7px;line-height:16px;color:#15181f;left:514.8px;transform-origin:0 0;top:206.00px;transform:scaleX(1.005);">BRAK</span>
<span class="t" style="font-family:'DejaVu Sans Condensed','Liberation Sans',sans-serif;font-size:12.7px;line-height:16px;color:#15181f;left:695.1999999999999px;transform-origin:0 0;top:206.00px;transform:scaleX(1.019);">PRODUKCJA</span>
<span class="t" style="font-family:'DejaVu Sans Condensed','Liberation Sans',sans-serif;font-size:12.7px;line-height:16px;color:#15181f;left:795.0999999999999px;transform-origin:0 0;top:206.00px;transform:scaleX(1.009);">CNC</span>
<span class="t" style="font-family:'DejaVu Sans Condensed','Liberation Sans',sans-serif;font-size:12.7px;line-height:16px;color:#15181f;left:1022.8px;transform-origin:0 0;top:206.00px;transform:scaleX(0.987);">160.1...</span>
<span class="t" style="font-family:'DejaVu Sans Condensed','Liberation Sans',sans-serif;font-size:12.7px;line-height:16px;color:#15181f;right:182.5px;transform-origin:100% 0;top:206.00px;transform:scaleX(0.987);">11</span>
<div style="left:1142px;top:210px;width:1px;height:1px;background:#b5702c;"></div>
<div style="left:1142px;top:217px;width:1px;height:1px;background:#b5702c;"></div>
<span class="t" style="font-family:'DejaVu Sans Condensed','Liberation Sans',sans-serif;font-size:12.7px;line-height:16px;color:#15181f;left:215.3px;transform-origin:0 0;top:226.00px;transform:scaleX(1.007);">Szwalnia</span>
<span class="t" style="font-family:'DejaVu Sans Condensed','Liberation Sans',sans-serif;font-size:12.7px;line-height:16px;color:#15181f;left:364.8px;transform-origin:0 0;top:226.00px;transform:scaleX(1.007);">Szwalnia</span>
<span class="t" style="font-family:'DejaVu Sans Condensed','Liberation Sans',sans-serif;font-size:12.7px;line-height:16px;color:#15181f;left:514.8px;transform-origin:0 0;top:226.00px;transform:scaleX(1.005);">BRAK</span>
<span class="t" style="font-family:'DejaVu Sans Condensed','Liberation Sans',sans-serif;font-size:12.7px;line-height:16px;color:#15181f;left:695.1999999999999px;transform-origin:0 0;top:226.00px;transform:scaleX(1.019);">PRODUKCJA</span>
<span class="t" style="font-family:'DejaVu Sans Condensed','Liberation Sans',sans-serif;font-size:12.7px;line-height:16px;color:#15181f;left:795.0999999999999px;transform-origin:0 0;top:226.00px;transform:scaleX(1.007);">Maszyna do sz...</span>
<span class="t" style="font-family:'DejaVu Sans Condensed','Liberation Sans',sans-serif;font-size:12.7px;line-height:16px;color:#15181f;left:1022.8px;transform-origin:0 0;top:226.00px;transform:scaleX(0.987);">55.11...</span>
<span class="t" style="font-family:'DejaVu Sans Condensed','Liberation Sans',sans-serif;font-size:12.7px;line-height:16px;color:#15181f;right:182.5px;transform-origin:100% 0;top:226.00px;transform:scaleX(0.987);">3</span>
<div style="left:1142px;top:230px;width:1px;height:1px;background:#b5702c;"></div>
<div style="left:1142px;top:237px;width:1px;height:1px;background:#b5702c;"></div>
<span class="t" style="font-family:'DejaVu Sans Condensed','Liberation Sans',sans-serif;font-size:12.7px;line-height:16px;color:#15181f;left:215.3px;transform-origin:0 0;top:246.00px;transform:scaleX(0.994);">Cięcie laserem1</span>
<span class="t" style="font-family:'DejaVu Sans Condensed','Liberation Sans',sans-serif;font-size:12.7px;line-height:16px;color:#15181f;left:364.8px;transform-origin:0 0;top:246.00px;">Cięcie laserem</span>
<span class="t" style="font-family:'DejaVu Sans Condensed','Liberation Sans',sans-serif;font-size:12.7px;line-height:16px;color:#15181f;left:514.8px;transform-origin:0 0;top:246.00px;transform:scaleX(1.005);">BRAK</span>
<span class="t" style="font-family:'DejaVu Sans Condensed','Liberation Sans',sans-serif;font-size:12.7px;line-height:16px;color:#15181f;left:695.1999999999999px;transform-origin:0 0;top:246.00px;transform:scaleX(1.019);">PRODUKCJA</span>
<span class="t" style="font-family:'DejaVu Sans Condensed','Liberation Sans',sans-serif;font-size:12.7px;line-height:16px;color:#15181f;left:795.0999999999999px;transform-origin:0 0;top:246.00px;transform:scaleX(1.008);">Wycinarka las...</span>
<span class="t" style="font-family:'DejaVu Sans Condensed','Liberation Sans',sans-serif;font-size:12.7px;line-height:16px;color:#15181f;left:1022.8px;transform-origin:0 0;top:246.00px;transform:scaleX(0.987);">239.2...</span>
<span class="t" style="font-family:'DejaVu Sans Condensed','Liberation Sans',sans-serif;font-size:12.7px;line-height:16px;color:#15181f;right:182.5px;transform-origin:100% 0;top:246.00px;transform:scaleX(0.987);">3</span>
<div style="left:1142px;top:250px;width:1px;height:1px;background:#b5702c;"></div>
<div style="left:1142px;top:257px;width:1px;height:1px;background:#b5702c;"></div>
<span class="t" style="font-family:'DejaVu Sans Condensed','Liberation Sans',sans-serif;font-size:12.7px;line-height:16px;color:#15181f;left:215.3px;transform-origin:0 0;top:266.00px;">Ślusarnia 1</span>
<span class="t" style="font-family:'DejaVu Sans Condensed','Liberation Sans',sans-serif;font-size:12.7px;line-height:16px;color:#15181f;left:364.8px;transform-origin:0 0;top:266.00px;transform:scaleX(1.006);">Ślusarnia</span>
<span class="t" style="font-family:'DejaVu Sans Condensed','Liberation Sans',sans-serif;font-size:12.7px;line-height:16px;color:#15181f;left:514.8px;transform-origin:0 0;top:266.00px;transform:scaleX(1.005);">BRAK</span>
<span class="t" style="font-family:'DejaVu Sans Condensed','Liberation Sans',sans-serif;font-size:12.7px;line-height:16px;color:#15181f;left:695.1999999999999px;transform-origin:0 0;top:266.00px;transform:scaleX(1.019);">PRODUKCJA</span>
<span class="t" style="font-family:'DejaVu Sans Condensed','Liberation Sans',sans-serif;font-size:12.7px;line-height:16px;color:#15181f;left:795.0999999999999px;transform-origin:0 0;top:266.00px;transform:scaleX(1.024);">Prasa krawędz...</span>
<span class="t" style="font-family:'DejaVu Sans Condensed','Liberation Sans',sans-serif;font-size:12.7px;line-height:16px;color:#15181f;left:1022.8px;transform-origin:0 0;top:266.00px;transform:scaleX(0.987);">159.2...</span>
<span class="t" style="font-family:'DejaVu Sans Condensed','Liberation Sans',sans-serif;font-size:12.7px;line-height:16px;color:#15181f;right:182.5px;transform-origin:100% 0;top:266.00px;transform:scaleX(0.987);">2</span>
<div style="left:1142px;top:270px;width:1px;height:1px;background:#b5702c;"></div>
<div style="left:1142px;top:277px;width:1px;height:1px;background:#b5702c;"></div>
<span class="t" style="font-family:'DejaVu Sans Condensed','Liberation Sans',sans-serif;font-size:12.7px;line-height:16px;color:#15181f;left:215.3px;transform-origin:0 0;top:286.00px;transform:scaleX(0.988);">Gniazdo spawalnicze</span>
<span class="t" style="font-family:'DejaVu Sans Condensed','Liberation Sans',sans-serif;font-size:12.7px;line-height:16px;color:#15181f;left:364.8px;transform-origin:0 0;top:286.00px;transform:scaleX(1.006);">Ślusarnia</span>
<span class="t" style="font-family:'DejaVu Sans Condensed','Liberation Sans',sans-serif;font-size:12.7px;line-height:16px;color:#15181f;left:514.8px;transform-origin:0 0;top:286.00px;transform:scaleX(1.005);">BRAK</span>
<span class="t" style="font-family:'DejaVu Sans Condensed','Liberation Sans',sans-serif;font-size:12.7px;line-height:16px;color:#15181f;left:695.1999999999999px;transform-origin:0 0;top:286.00px;">GŁÓWNY</span>
<span class="t" style="font-family:'DejaVu Sans Condensed','Liberation Sans',sans-serif;font-size:12.7px;line-height:16px;color:#15181f;left:795.0999999999999px;transform-origin:0 0;top:286.00px;transform:scaleX(1.029);">Spawarka TIG</span>
<span class="t" style="font-family:'DejaVu Sans Condensed','Liberation Sans',sans-serif;font-size:12.7px;line-height:16px;color:#15181f;left:1022.8px;transform-origin:0 0;top:286.00px;transform:scaleX(0.987);">149.4...</span>
<span class="t" style="font-family:'DejaVu Sans Condensed','Liberation Sans',sans-serif;font-size:12.7px;line-height:16px;color:#15181f;right:182.5px;transform-origin:100% 0;top:286.00px;transform:scaleX(0.987);">2</span>
<div style="left:1142px;top:290px;width:1px;height:1px;background:#b5702c;"></div>
<div style="left:1142px;top:297px;width:1px;height:1px;background:#b5702c;"></div>
<span class="t" style="font-family:'DejaVu Sans Condensed','Liberation Sans',sans-serif;font-size:12.7px;line-height:16px;color:#15181f;left:215.3px;transform-origin:0 0;top:306.00px;transform:scaleX(0.994);">Montaż</span>
<span class="t" style="font-family:'DejaVu Sans Condensed','Liberation Sans',sans-serif;font-size:12.7px;line-height:16px;color:#15181f;left:364.8px;transform-origin:0 0;top:306.00px;transform:scaleX(0.994);">Montaż</span>
<span class="t" style="font-family:'DejaVu Sans Condensed','Liberation Sans',sans-serif;font-size:12.7px;line-height:16px;color:#15181f;left:514.8px;transform-origin:0 0;top:306.00px;transform:scaleX(1.005);">BRAK</span>
<span class="t" style="font-family:'DejaVu Sans Condensed','Liberation Sans',sans-serif;font-size:12.7px;line-height:16px;color:#15181f;left:695.1999999999999px;transform-origin:0 0;top:306.00px;transform:scaleX(1.019);">PRODUKCJA</span>
<span class="t" style="font-family:'DejaVu Sans Condensed','Liberation Sans',sans-serif;font-size:12.7px;line-height:16px;color:#15181f;left:795.0999999999999px;transform-origin:0 0;top:306.00px;transform:scaleX(1.008);">Stół montażowy</span>
<span class="t" style="font-family:'DejaVu Sans Condensed','Liberation Sans',sans-serif;font-size:12.7px;line-height:16px;color:#15181f;left:1022.8px;transform-origin:0 0;top:306.00px;transform:scaleX(0.987);">254.1...</span>
<span class="t" style="font-family:'DejaVu Sans Condensed','Liberation Sans',sans-serif;font-size:12.7px;line-height:16px;color:#15181f;right:182.5px;transform-origin:100% 0;top:306.00px;transform:scaleX(0.987);">1</span>
<div style="left:1142px;top:310px;width:1px;height:1px;background:#b5702c;"></div>
<div style="left:1142px;top:317px;width:1px;height:1px;background:#b5702c;"></div>
<span class="t" style="font-family:'DejaVu Sans Condensed','Liberation Sans',sans-serif;font-size:12.7px;line-height:16px;color:#15181f;left:215.3px;transform-origin:0 0;top:326.00px;transform:scaleX(0.987);">Szlifowanie1</span>
<span class="t" style="font-family:'DejaVu Sans Condensed','Liberation Sans',sans-serif;font-size:12.7px;line-height:16px;color:#15181f;left:364.8px;transform-origin:0 0;top:326.00px;transform:scaleX(0.987);">Szlifowanie</span>
<span class="t" style="font-family:'DejaVu Sans Condensed','Liberation Sans',sans-serif;font-size:12.7px;line-height:16px;color:#15181f;left:514.8px;transform-origin:0 0;top:326.00px;transform:scaleX(1.005);">BRAK</span>
<span class="t" style="font-family:'DejaVu Sans Condensed','Liberation Sans',sans-serif;font-size:12.7px;line-height:16px;color:#15181f;left:695.1999999999999px;transform-origin:0 0;top:326.00px;transform:scaleX(1.019);">PRODUKCJA</span>
<span class="t" style="font-family:'DejaVu Sans Condensed','Liberation Sans',sans-serif;font-size:12.7px;line-height:16px;color:#15181f;left:795.0999999999999px;transform-origin:0 0;top:326.00px;transform:scaleX(0.987);">Stół szlifierski</span>
<span class="t" style="font-family:'DejaVu Sans Condensed','Liberation Sans',sans-serif;font-size:12.7px;line-height:16px;color:#15181f;left:1022.8px;transform-origin:0 0;top:326.00px;transform:scaleX(0.987);">76.15...</span>
<span class="t" style="font-family:'DejaVu Sans Condensed','Liberation Sans',sans-serif;font-size:12.7px;line-height:16px;color:#15181f;right:182.5px;transform-origin:100% 0;top:326.00px;transform:scaleX(0.987);">1</span>
<div style="left:1142px;top:330px;width:1px;height:1px;background:#b5702c;"></div>
<div style="left:1142px;top:337px;width:1px;height:1px;background:#b5702c;"></div>
<span class="t" style="font-family:'DejaVu Sans Condensed','Liberation Sans',sans-serif;font-size:12.7px;line-height:16px;color:#15181f;left:215.3px;transform-origin:0 0;top:346.00px;transform:scaleX(0.987);">Oklejanie1</span>
<span class="t" style="font-family:'DejaVu Sans Condensed','Liberation Sans',sans-serif;font-size:12.7px;line-height:16px;color:#15181f;left:364.8px;transform-origin:0 0;top:346.00px;transform:scaleX(0.987);">Oklejanie</span>
<span class="t" style="font-family:'DejaVu Sans Condensed','Liberation Sans',sans-serif;font-size:12.7px;line-height:16px;color:#15181f;left:514.8px;transform-origin:0 0;top:346.00px;transform:scaleX(1.005);">BRAK</span>
<span class="t" style="font-family:'DejaVu Sans Condensed','Liberation Sans',sans-serif;font-size:12.7px;line-height:16px;color:#15181f;left:695.1999999999999px;transform-origin:0 0;top:346.00px;transform:scaleX(1.019);">PRODUKCJA</span>
<span class="t" style="font-family:'DejaVu Sans Condensed','Liberation Sans',sans-serif;font-size:12.7px;line-height:16px;color:#15181f;left:795.0999999999999px;transform-origin:0 0;top:346.00px;transform:scaleX(0.987);">Maszyna 2</span>
<span class="t" style="font-family:'DejaVu Sans Condensed','Liberation Sans',sans-serif;font-size:12.7px;line-height:16px;color:#15181f;left:1022.8px;transform-origin:0 0;top:346.00px;transform:scaleX(0.987);">231.5...</span>
<span class="t" style="font-family:'DejaVu Sans Condensed','Liberation Sans',sans-serif;font-size:12.7px;line-height:16px;color:#15181f;right:182.5px;transform-origin:100% 0;top:346.00px;transform:scaleX(0.987);">1</span>
<div style="left:1142px;top:350px;width:1px;height:1px;background:#b5702c;"></div>
<div style="left:1142px;top:357px;width:1px;height:1px;background:#b5702c;"></div>
<span class="t" style="font-family:'DejaVu Sans Condensed','Liberation Sans',sans-serif;font-size:12.7px;line-height:16px;color:#15181f;left:215.3px;transform-origin:0 0;top:366.00px;transform:scaleX(0.987);">Lakiernia1</span>
<span class="t" style="font-family:'DejaVu Sans Condensed','Liberation Sans',sans-serif;font-size:12.7px;line-height:16px;color:#15181f;left:364.8px;transform-origin:0 0;top:366.00px;transform:scaleX(0.987);">Lakiernia</span>
<span class="t" style="font-family:'DejaVu Sans Condensed','Liberation Sans',sans-serif;font-size:12.7px;line-height:16px;color:#15181f;left:514.8px;transform-origin:0 0;top:366.00px;transform:scaleX(1.005);">BRAK</span>
<span class="t" style="font-family:'DejaVu Sans Condensed','Liberation Sans',sans-serif;font-size:12.7px;line-height:16px;color:#15181f;left:695.1999999999999px;transform-origin:0 0;top:366.00px;transform:scaleX(1.019);">PRODUKCJA</span>
<span class="t" style="font-family:'DejaVu Sans Condensed','Liberation Sans',sans-serif;font-size:12.7px;line-height:16px;color:#15181f;left:795.0999999999999px;transform-origin:0 0;top:366.00px;transform:scaleX(0.987);">Maszyna 1</span>
<span class="t" style="font-family:'DejaVu Sans Condensed','Liberation Sans',sans-serif;font-size:12.7px;line-height:16px;color:#15181f;left:1022.8px;transform-origin:0 0;top:366.00px;transform:scaleX(0.987);">144.2...</span>
<span class="t" style="font-family:'DejaVu Sans Condensed','Liberation Sans',sans-serif;font-size:12.7px;line-height:16px;color:#15181f;right:182.5px;transform-origin:100% 0;top:366.00px;transform:scaleX(0.987);">1</span>
<div style="left:1142px;top:370px;width:1px;height:1px;background:#b5702c;"></div>
<div style="left:1142px;top:377px;width:1px;height:1px;background:#b5702c;"></div>
<span class="t" style="font-family:'DejaVu Sans Condensed','Liberation Sans',sans-serif;font-size:12.7px;line-height:16px;color:#15181f;left:215.3px;transform-origin:0 0;top:386.00px;transform:scaleX(0.987);">Produkcja</span>
<span class="t" style="font-family:'DejaVu Sans Condensed','Liberation Sans',sans-serif;font-size:12.7px;line-height:16px;color:#15181f;left:364.8px;transform-origin:0 0;top:386.00px;transform:scaleX(0.987);">Produkcja</span>
<span class="t" style="font-family:'DejaVu Sans Condensed','Liberation Sans',sans-serif;font-size:12.7px;line-height:16px;color:#15181f;left:514.8px;transform-origin:0 0;top:386.00px;transform:scaleX(1.005);">BRAK</span>
<span class="t" style="font-family:'DejaVu Sans Condensed','Liberation Sans',sans-serif;font-size:12.7px;line-height:16px;color:#15181f;left:695.1999999999999px;transform-origin:0 0;top:386.00px;transform:scaleX(1.019);">PRODUKCJA</span>
<span class="t" style="font-family:'DejaVu Sans Condensed','Liberation Sans',sans-serif;font-size:12.7px;line-height:16px;color:#15181f;left:1022.8px;transform-origin:0 0;top:386.00px;transform:scaleX(0.987);">224.1...</span>
<span class="t" style="font-family:'DejaVu Sans Condensed','Liberation Sans',sans-serif;font-size:12.7px;line-height:16px;color:#15181f;right:182.5px;transform-origin:100% 0;top:386.00px;transform:scaleX(0.987);">0</span>
<div style="left:1142px;top:390px;width:1px;height:1px;background:#b5702c;"></div>
<div style="left:1142px;top:397px;width:1px;height:1px;background:#b5702c;"></div>
<span class="t" style="font-family:'DejaVu Sans Condensed','Liberation Sans',sans-serif;font-size:12.7px;line-height:16px;color:#15181f;left:215.3px;transform-origin:0 0;top:406.00px;transform:scaleX(0.987);clip-path:inset(0 0 8.500px 0);">Cięcie tekstyliów</span>
<span class="t" style="font-family:'DejaVu Sans Condensed','Liberation Sans',sans-serif;font-size:12.7px;line-height:16px;color:#15181f;left:364.8px;transform-origin:0 0;top:406.00px;transform:scaleX(0.987);clip-path:inset(0 0 8.500px 0);">Produkcja</span>
<span class="t" style="font-family:'DejaVu Sans Condensed','Liberation Sans',sans-serif;font-size:12.7px;line-height:16px;color:#15181f;left:514.8px;transform-origin:0 0;top:406.00px;transform:scaleX(1.005);clip-path:inset(0 0 8.500px 0);">BRAK</span>
<span class="t" style="font-family:'DejaVu Sans Condensed','Liberation Sans',sans-serif;font-size:12.7px;line-height:16px;color:#15181f;left:695.1999999999999px;transform-origin:0 0;top:406.00px;clip-path:inset(0 0 8.500px 0);">GŁÓWNY</span>
<span class="t" style="font-family:'DejaVu Sans Condensed','Liberation Sans',sans-serif;font-size:12.7px;line-height:16px;color:#15181f;left:1022.8px;transform-origin:0 0;top:406.00px;transform:scaleX(0.987);clip-path:inset(0 0 8.500px 0);">117.2...</span>
<span class="t" style="font-family:'DejaVu Sans Condensed','Liberation Sans',sans-serif;font-size:12.7px;line-height:16px;color:#15181f;right:182.5px;transform-origin:100% 0;top:406.00px;transform:scaleX(0.987);clip-path:inset(0 0 8.500px 0);">0</span>
<div style="left:200px;top:413px;width:944px;height:37px;background:linear-gradient(#e3e7f0,#d5dbe8);border-top:1px solid #a9b3c6;"></div>
<div style="left:215px;top:417px;width:146px;height:29px;background:#fff;border:1px solid #c5ccdb;"></div>
<span class="t" style="font-family:'DejaVu Sans Condensed','Liberation Sans',sans-serif;font-size:12.7px;line-height:16px;color:#15181f;left:226px;transform-origin:0 0;top:424.00px;transform:scaleX(0.987);">34 pozycji</span>
<div style="left:200px;top:450px;width:944px;height:16px;background:linear-gradient(#dcdfe6,#e9eaee 30%,#e9eaee);"></div>
<div style="left:218px;top:451px;width:901px;height:14px;background:linear-gradient(#f5f6f9,#e3e7ef 45%,#cfd6e3 55%,#d9dee9);border:1px solid #a9b3c6;border-radius:2px;"></div>
<svg style="left:205px;top:453px" width="6" height="9" viewBox="0 0 6 9"><path d="M5.500 .5 V8.500 L.8 4.500z" fill="#8a93a6"/></svg>
<svg style="left:1131px;top:453px" width="6" height="9" viewBox="0 0 6 9"><path d="M.5 .5 V8.500 L5.200 4.500z" fill="#8a93a6"/></svg>
<div style="left:665px;top:454px;width:1px;height:7px;background:#6a7388;"></div>
<div style="left:668px;top:454px;width:1px;height:7px;background:#6a7388;"></div>
<div style="left:671px;top:454px;width:1px;height:7px;background:#6a7388;"></div>
<div style="left:1144px;top:121px;width:16px;height:329px;background:linear-gradient(90deg,#dcdfe6,#e9eaee 30%,#e9eaee);"></div>
<div style="left:1145px;top:139px;width:14px;height:84px;background:linear-gradient(90deg,#f0f2f6,#dfe3ec 50%,#d0d6e3);border:1px solid #a9b3c6;border-radius:2px;"></div>
<div style="left:1148px;top:177px;width:8px;height:1px;background:#6a7388;"></div>
<div style="left:1148px;top:179px;width:8px;height:1px;background:#6a7388;"></div>
<div style="left:1148px;top:181px;width:8px;height:1px;background:#6a7388;"></div>
<div style="left:1148px;top:183px;width:8px;height:1px;background:#6a7388;"></div>
<svg style="left:1147px;top:126px" width="9" height="6" viewBox="0 0 9 6"><path d="M.5 5.500 H8.500 L4.500 .8z" fill="#8a93a6"/></svg>
<svg style="left:1147px;top:440px" width="9" height="6" viewBox="0 0 9 6"><path d="M.5 .5 H8.500 L4.500 5.200z" fill="#8a93a6"/></svg>
<div style="left:674px;top:468px;width:2px;height:1px;background:#6a7690;"></div>
<div style="left:677px;top:468px;width:2px;height:1px;background:#6a7690;"></div>
<div style="left:680px;top:468px;width:2px;height:1px;background:#6a7690;"></div>
<div style="left:683px;top:468px;width:2px;height:1px;background:#6a7690;"></div>
</div>
<div class="sec details">
<div style="left:283px;top:473px;width:82px;height:26px;background:linear-gradient(#e6eaf2 0%,#dde2ed 50%,#cdd5e4 100%);border:1px solid #a9b3c6;border-bottom:none;border-radius:3px 3px 0 0;box-shadow:inset 1px 1px 0 rgba(255,255,255,.6);"></div>
<div style="left:201px;top:498px;width:959px;height:141px;background:#98a5bf;border-radius:3px;"></div>
<div style="left:202px;top:499px;width:957px;height:139px;background:#bbc6db;border-top:4px solid #ffe699;border-bottom:4px solid #ffe699;border-radius:2px;"></div>
<div style="left:205px;top:472px;width:77px;height:29px;background:linear-gradient(#f6f6f3 0%,#f4f2ea 40%,#ffe9ab 70%,#ffe7a2 100%);border:1px solid #c9cfdb;border-bottom:none;border-radius:3px 3px 0 0;"></div>
<span class="t" style="font-family:'DejaVu Sans Condensed','Liberation Sans',sans-serif;font-size:11px;line-height:14px;color:#1f2534;left:235.5px;transform-origin:0 0;top:481.00px;transform:scaleX(0.964);">Obiekty</span>
<span class="t" style="font-family:'DejaVu Sans Condensed','Liberation Sans',sans-serif;font-size:11px;line-height:14px;color:#1f2534;left:312.5px;transform-origin:0 0;top:481.00px;transform:scaleX(0.987);">Operacje</span>
<svg style="left:213px;top:481px" width="17" height="11" viewBox="0 0 17 11"><rect x=".5" y=".5" width="16" height="9.500" rx="1" fill="#f4f6fa" stroke="#7a8498"/><rect x="2" y="2.500" width="8" height="2.500" fill="#3f86d6"/><rect x="11" y="2.500" width="4" height="2.500" fill="#e04a3a"/><path d="M2 7.500h13" stroke="#8a94a8" stroke-width="1" stroke-dasharray="1.500 1"/></svg>
<svg style="left:291px;top:477px" width="17" height="18" viewBox="0 0 17 18"><rect x="1.500" y="1.500" width="11.500" height="12.500" fill="#eef1f8" stroke="#8f9cc0" stroke-width="1"/><path d="M7.500 8 L13.500 14.800" stroke="#3a4256" stroke-width="4.200" stroke-linecap="round"/><circle cx="6" cy="6.200" r="3.500" fill="#d3d8e2" stroke="#3a4256" stroke-width="1"/><path d="M7.500 8 L13.500 14.800" stroke="#d3d8e2" stroke-width="2.400" stroke-linecap="round"/><path d="M6.300 6.500 L2.500 2.700" stroke="#eef1f8" stroke-width="2.600"/><path d="M5 7.300 L4.200 4.300 M7.300 5 L4.300 4.200" stroke="#3a4256" stroke-width=".8"/></svg>
<svg style="left:211px;top:510px" width="16" height="16" viewBox="0 0 16 16"><path d="M5.500 .8h5v4.700h4.700v5h-4.700v4.700h-5v-4.700h-4.700v-5h4.700z" fill="#4a8ff0" stroke="#1f55b8" stroke-width="1.200" stroke-linejoin="round"/><path d="M6.700 2h2.600v4.700h4.700v1.300h-12v-1.300h4.700z" fill="#a4cbfb" opacity=".75"/></svg>
<svg style="left:213px;top:540px" width="12" height="12" viewBox="0 0 12 12"><path d="M2.200 2.200 L9.800 9.800 M9.800 2.200 L2.200 9.800" stroke="#6ab6ea" stroke-width="4.600" stroke-linecap="round" opacity=".8"/><path d="M2.300 2.300 L9.700 9.700 M9.700 2.300 L2.300 9.700" stroke="#4a9ad6" stroke-width="2.800" stroke-linecap="round"/></svg>
<svg style="left:209px;top:564px" width="19" height="19" viewBox="0 0 18 18"><circle cx="6.500" cy="5" r="3.200" fill="none" stroke="#3c9a3c" stroke-width="2"/><circle cx="12.500" cy="7" r="3.200" fill="none" stroke="#e8a820" stroke-width="2"/><circle cx="5" cy="10.500" r="3.200" fill="none" stroke="#2f62c0" stroke-width="2"/><circle cx="10.500" cy="13" r="3.200" fill="none" stroke="#d84a28" stroke-width="2"/></svg>
<svg style="left:208px;top:596px" width="17" height="18" viewBox="0 0 17 18"><rect x="5.200" y="1.500" width="10.300" height="10.500" fill="#eef1f8" stroke="#9aa6cc" stroke-width="1"/><path d="M5.700 11.500h9.500" stroke="#5a62c8" stroke-width="1"/><path d="M.5 1h3.500M2.200 1v12M.5 13h3.500" stroke="#1e2740" stroke-width="1.300" fill="none"/><path d="M5 13.500v4M5 15.500h11M16 13.500v4" stroke="#1e2740" stroke-width="1.300" fill="none"/></svg>
<svg style="left:1134.5px;top:509.5px" width="17" height="16" viewBox="0 0 17 16"><g fill="#cfe2fb" stroke="#2f6fd0" stroke-width="1"><circle cx="2.500" cy="3" r="1.800"/><circle cx="2.500" cy="8" r="1.800"/><circle cx="2.500" cy="13" r="1.800"/></g><path d="M6.500 3.500h8.500M6.500 8.500h8.500M6.500 13.500h8.500" stroke="#f4f6fa" stroke-width="1.400"/><path d="M6.500 2.400h8.500M6.500 7.400h8.500M6.500 12.400h8.500" stroke="#1e2740" stroke-width="1.400"/></svg>
<div style="left:235px;top:503px;width:875px;height:23px;background:linear-gradient(#e9ecf3 0%,#e2e6ef 48%,#d9deea 52%,#dde2ec 100%);"></div>
<div style="left:245px;top:504px;width:2px;height:22px;background:linear-gradient(90deg,#c5ccdb 50%,#f3f5f9 50%);"></div>
<span class="t" style="font-family:'DejaVu Sans Condensed','Liberation Sans',sans-serif;font-size:12.7px;line-height:16px;color:#3d4860;left:248.6px;transform-origin:0 0;top:508.00px;">Kod</span>
<div style="left:345px;top:504px;width:2px;height:22px;background:linear-gradient(90deg,#c5ccdb 50%,#f3f5f9 50%);"></div>
<span class="t" style="font-family:'DejaVu Sans Condensed','Liberation Sans',sans-serif;font-size:12.7px;line-height:16px;color:#3d4860;left:348.6px;transform-origin:0 0;top:508.00px;transform:scaleX(0.987);">Nazwa</span>
<div style="left:482px;top:504px;width:2px;height:22px;background:linear-gradient(90deg,#c5ccdb 50%,#f3f5f9 50%);"></div>
<span class="t" style="font-family:'DejaVu Sans Condensed','Liberation Sans',sans-serif;font-size:12.7px;line-height:16px;color:#3d4860;left:485.6px;transform-origin:0 0;top:508.00px;transform:scaleX(0.987);">Grupa</span>
<div style="left:618px;top:504px;width:2px;height:22px;background:linear-gradient(90deg,#c5ccdb 50%,#f3f5f9 50%);"></div>
<span class="t" style="font-family:'DejaVu Sans Condensed','Liberation Sans',sans-serif;font-size:12.7px;line-height:16px;color:#3d4860;left:621.6px;transform-origin:0 0;top:508.00px;transform:scaleX(0.987);">Typ</span>
<div style="left:761px;top:504px;width:2px;height:22px;background:linear-gradient(90deg,#c5ccdb 50%,#f3f5f9 50%);"></div>
<span class="t" style="font-family:'DejaVu Sans Condensed','Liberation Sans',sans-serif;font-size:12.7px;line-height:16px;color:#3d4860;left:764.6px;transform-origin:0 0;top:508.00px;transform:scaleX(0.987);">Numer inwent...</span>
<div style="left:861px;top:504px;width:2px;height:22px;background:linear-gradient(90deg,#c5ccdb 50%,#f3f5f9 50%);"></div>
<span class="t" style="font-family:'DejaVu Sans Condensed','Liberation Sans',sans-serif;font-size:12.7px;line-height:16px;color:#3d4860;left:864.6px;transform-origin:0 0;top:508.00px;transform:scaleX(0.987);">Numer fabrycz...</span>
<div style="left:961px;top:504px;width:2px;height:22px;background:linear-gradient(90deg,#c5ccdb 50%,#f3f5f9 50%);"></div>
<span class="t" style="font-family:'DejaVu Sans Condensed','Liberation Sans',sans-serif;font-size:12.7px;line-height:16px;color:#3d4860;left:964.6px;transform-origin:0 0;top:508.00px;transform:scaleX(0.987);">Data zakupu</span>
<div style="left:1061px;top:504px;width:2px;height:22px;background:linear-gradient(90deg,#c5ccdb 50%,#f3f5f9 50%);"></div>
<span class="t" style="font-family:'DejaVu Sans Condensed','Liberation Sans',sans-serif;font-size:12.7px;line-height:16px;color:#3d4860;left:1064.6px;transform-origin:0 0;top:508.00px;transform:scaleX(0.980);">Data od</span>
<svg style="left:236px;top:510px" width="9" height="9" viewBox="0 0 9 9"><path d="M4.500 .8V8.200M.8 4.500H8.200M1.900 1.900L7.100 7.100M7.100 1.900L1.900 7.100" stroke="#1c2030" stroke-width=".95"/></svg>
<div style="left:235px;top:526px;width:11px;height:21px;background:#e4e8f0;"></div>
<div style="left:246px;top:526px;width:864px;height:20px;background:#edf5ed;"></div>
<div style="left:235px;top:546px;width:875px;height:2px;background:linear-gradient(#9aa5bb 50%,#dfe4ee 50%);"></div>
<span class="t" style="font-family:'DejaVu Sans Condensed','Liberation Sans',sans-serif;font-size:12.7px;line-height:16px;color:#6b7386;left:619px;transform-origin:0 0;top:529.00px;transform:scaleX(0.977);">kliknij aby dodać filtr</span>
<svg style="left:236.5px;top:531px" width="8" height="11" viewBox="0 0 8 11"><circle cx="4" cy="3" r="2" fill="#fff" stroke="#15181f" stroke-width="1.300"/><path d="M2.600 3.400a1.500 1.500 0 0 0 2.800 0z" fill="#15181f"/><path d="M4 5v4.500" stroke="#15181f" stroke-width="1.300"/></svg>
<div style="left:246px;top:548px;width:864px;height:20px;background:#fff4dc;"></div>
<div style="left:235px;top:548px;width:11px;height:20px;background:linear-gradient(#e6e9f1,#d9deea);border-bottom:1px solid #eef0f5;"></div>
<span class="t" style="font-family:'DejaVu Sans Condensed','Liberation Sans',sans-serif;font-size:12.7px;line-height:16px;color:#15181f;left:249px;transform-origin:0 0;top:551.00px;transform:scaleX(1.009);">CNC</span>
<span class="t" style="font-family:'DejaVu Sans Condensed','Liberation Sans',sans-serif;font-size:12.7px;line-height:16px;color:#15181f;left:349px;transform-origin:0 0;top:551.00px;transform:scaleX(1.009);">CNC</span>
<div style="left:246px;top:568px;width:864px;height:20px;background:#edf5ed;"></div>
<div style="left:235px;top:568px;width:11px;height:20px;background:linear-gradient(#e6e9f1,#d9deea);border-bottom:1px solid #eef0f5;"></div>
<span class="t" style="font-family:'DejaVu Sans Condensed','Liberation Sans',sans-serif;font-size:12.7px;line-height:16px;color:#15181f;left:249px;transform-origin:0 0;top:571.00px;transform:scaleX(1.023);">Frez wykańcza...</span>
<span class="t" style="font-family:'DejaVu Sans Condensed','Liberation Sans',sans-serif;font-size:12.7px;line-height:16px;color:#15181f;left:349px;transform-origin:0 0;top:571.00px;transform:scaleX(1.014);">Frez wykańczający 2...</span>
<div style="left:246px;top:588px;width:864px;height:20px;background:#f5f6fa;"></div>
<div style="left:235px;top:588px;width:11px;height:20px;background:linear-gradient(#e6e9f1,#d9deea);border-bottom:1px solid #eef0f5;"></div>
<span class="t" style="font-family:'DejaVu Sans Condensed','Liberation Sans',sans-serif;font-size:12.7px;line-height:16px;color:#15181f;left:249px;transform-origin:0 0;top:591.00px;transform:scaleX(1.049);">Frez walcowo ...</span>
<span class="t" style="font-family:'DejaVu Sans Condensed','Liberation Sans',sans-serif;font-size:12.7px;line-height:16px;color:#15181f;left:349px;transform-origin:0 0;top:591.00px;transform:scaleX(1.042);">Frez walcowo czoło...</span>
<div style="left:246px;top:608px;width:864px;height:8px;background:#edf5ed;"></div>
<div style="left:235px;top:608px;width:11px;height:8px;background:linear-gradient(#e6e9f1,#d9deea);border-bottom:1px solid #eef0f5;"></div>
<span class="t" style="font-family:'DejaVu Sans Condensed','Liberation Sans',sans-serif;font-size:12.7px;line-height:16px;color:#15181f;left:249px;transform-origin:0 0;top:611.00px;transform:scaleX(0.987);clip-path:inset(0 0 11.500px 0);">Podcinacz le...</span>
<span class="t" style="font-family:'DejaVu Sans Condensed','Liberation Sans',sans-serif;font-size:12.7px;line-height:16px;color:#15181f;left:349px;transform-origin:0 0;top:611.00px;transform:scaleX(0.987);clip-path:inset(0 0 11.500px 0);">Podcinacz lewy...</span>
<svg style="left:239px;top:553px" width="6" height="10" viewBox="0 0 6 10"><path d="M.5 .8 L5 5 L.5 9.200z" fill="#111"/></svg>
<div style="left:235px;top:616px;width:875px;height:17px;background:#e9ecf2;"></div>
<div style="left:252px;top:618px;width:595px;height:13px;background:linear-gradient(#f5f6f9,#e3e7ef 45%,#cfd6e3 55%,#d9dee9);border:1px solid #a9b3c6;border-radius:2px;"></div>
<div style="left:545px;top:621px;width:1px;height:7px;background:#6a7388;"></div>
<div style="left:548px;top:621px;width:1px;height:7px;background:#6a7388;"></div>
<div style="left:551px;top:621px;width:1px;height:7px;background:#6a7388;"></div>
<svg style="left:241px;top:620px" width="6" height="9" viewBox="0 0 6 9"><path d="M5.500 .5 V8.500 L.8 4.500z" fill="#8a93a6"/></svg>
<svg style="left:1098px;top:620px" width="6" height="9" viewBox="0 0 6 9"><path d="M.5 .5 V8.500 L5.200 4.500z" fill="#8a93a6"/></svg>
<div style="left:1110px;top:503px;width:16px;height:113px;background:#e9ecf2;"></div>
<div style="left:1111px;top:522px;width:13px;height:19px;background:linear-gradient(90deg,#f0f2f6,#dfe3ec 50%,#d0d6e3);border:1px solid #a9b3c6;border-radius:2px;"></div>
<div style="left:1114px;top:528px;width:7px;height:1px;background:#6a7388;"></div>
<div style="left:1114px;top:531px;width:7px;height:1px;background:#6a7388;"></div>
<div style="left:1114px;top:534px;width:7px;height:1px;background:#6a7388;"></div>
<svg style="left:1113px;top:509px" width="9" height="6" viewBox="0 0 9 6"><path d="M.5 5.500 H8.500 L4.500 .8z" fill="#8a93a6"/></svg>
<svg style="left:1113px;top:605px" width="9" height="6" viewBox="0 0 9 6"><path d="M.5 .5 H8.500 L4.500 5.200z" fill="#8a93a6"/></svg>
</div>
<div class="sec details-toggle">
<div style="left:674px;top:641px;width:2px;height:1px;background:#6a7690;"></div>
<div style="left:677px;top:641px;width:2px;height:1px;background:#6a7690;"></div>
<div style="left:680px;top:641px;width:2px;height:1px;background:#6a7690;"></div>
<div style="left:683px;top:641px;width:2px;height:1px;background:#6a7690;"></div>
<div style="left:200px;top:663px;width:961px;height:4px;background:#ffe699;border-radius:0 0 2px 2px;"></div>
<span class="t" style="font-family:'DejaVu Sans Condensed','Liberation Sans',sans-serif;font-size:11px;line-height:14px;color:#20283a;letter-spacing:3.3px;left:594px;transform-origin:0 0;top:647.00px;transform:scaleX(0.978);">UKRYJ SZCZEGÓŁY</span>
<span class="t" style="font-family:'DejaVu Sans Condensed','Liberation Sans',sans-serif;font-size:11px;line-height:14px;color:#20283a;left:738px;transform-origin:0 0;top:647.00px;transform:scaleX(1.303);">[F8]</span>
</div>
</div>
</body></html>
